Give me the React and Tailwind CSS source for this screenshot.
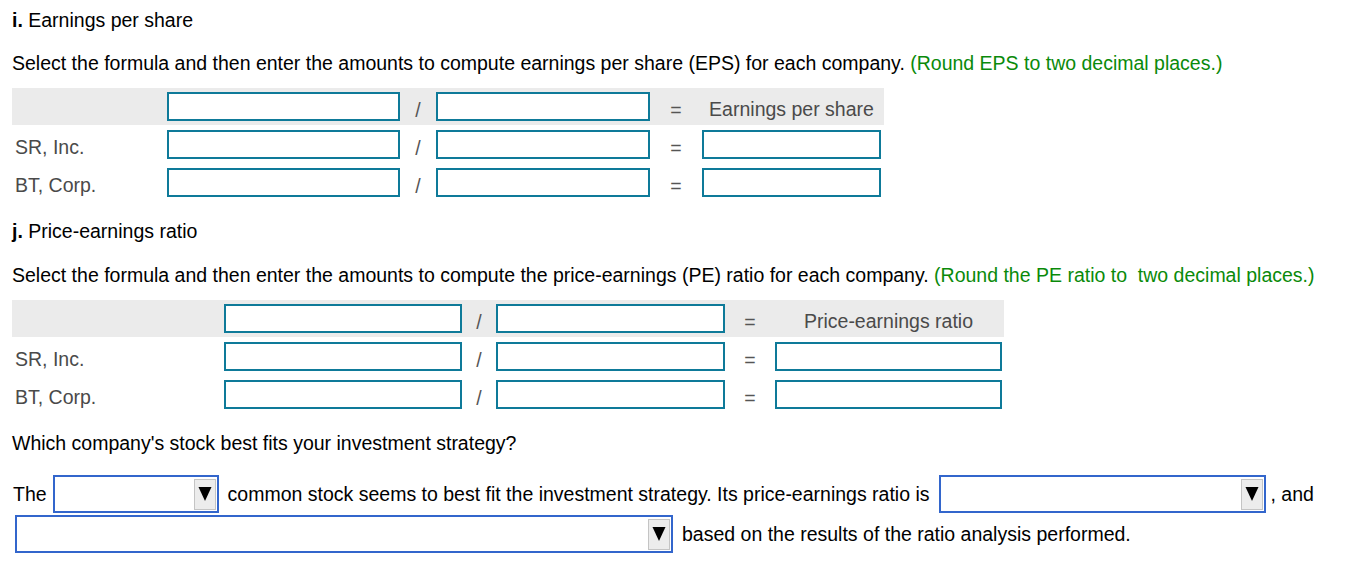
const F = { fontFamily: '"Liberation Sans", Arial, sans-serif' };

const TABLE_I = { label: 155, a: 233, slash: 36, b: 214, eq: 52, res: 179, pad: 3 };
const TABLE_J = { label: 212, a: 238, slash: 34, b: 229, eq: 50, res: 227, pad: 2 };

function Box({ w }) {
  return (
    <div
      className="h-[29px] shrink-0 border-2 border-[#0e7a99] bg-white"
      style={{ width: w }}
    />
  );
}

function Row({ cols, label, header, resultLabel }) {
  return (
    <div
      className={
        "flex items-center " + (header ? "h-[37px] bg-[#ebebeb]" : "h-[38px]")
      }
      style={{ width: cols.label + cols.a + cols.slash + cols.b + cols.eq + cols.res + cols.pad }}
    >
      <div className="shrink-0 pl-[3px] pt-[6px] text-[#4a4a4a]" style={{ width: cols.label }}>
        {label}
      </div>
      <Box w={cols.a} />
      <div className="shrink-0 pt-[7px] text-center text-[#555]" style={{ width: cols.slash }}>/</div>
      <Box w={cols.b} />
      <div className="shrink-0 pt-[7px] text-center text-[#555]" style={{ width: cols.eq }}>=</div>
      {header ? (
        <div className="shrink-0 pt-[5px] text-center text-[#4a4a4a]" style={{ width: cols.res }}>
          {resultLabel}
        </div>
      ) : (
        <Box w={cols.res} />
      )}
    </div>
  );
}

function RatioTable({ cols, resultLabel }) {
  return (
    <div className="flex flex-col">
      <Row cols={cols} header resultLabel={resultLabel} />
      <Row cols={cols} label="SR, Inc." />
      <Row cols={cols} label="BT, Corp." />
    </div>
  );
}

function Select({ w }) {
  return (
    <div
      className="h-[38px] shrink-0 border-2 border-[#3366cc] bg-white flex items-center justify-end pr-[1px]"
      style={{ width: w }}
    >
      <div className="w-[22px] h-[31px] bg-[#ececec] border border-[#c4c4c4] flex items-center justify-center">
        <svg width="14" height="16" viewBox="0 0 14 16">
          <path d="M0.5 1 L13.5 1 L7 15 Z" fill="#000" />
        </svg>
      </div>
    </div>
  );
}

export default function App() {
  return (
    <div className="min-h-screen bg-white text-[19.5px] leading-6 text-black pl-3" style={F}>
      <div className="pt-2">
        <b>i.</b> Earnings per share
      </div>
      <div className="mt-[19px]">
        Select the formula and then enter the amounts to compute earnings per share (EPS) for each company.{" "}
        <span className="text-[#0a8a0a]">(Round EPS to two decimal places.)</span>
      </div>
      <div className="mt-[13px]">
        <RatioTable cols={TABLE_I} resultLabel="Earnings per share" />
      </div>

      <div className="mt-[18px]">
        <b>j.</b> Price-earnings ratio
      </div>
      <div className="mt-5">
        Select the formula and then enter the amounts to compute the price-earnings (PE) ratio for each company.{" "}
        <span className="text-[#0a8a0a]">(Round the PE ratio to&nbsp; two decimal places.)</span>
      </div>
      <div className="mt-[13px]">
        <RatioTable cols={TABLE_J} resultLabel="Price-earnings ratio" />
      </div>

      <div className="mt-[18px]">Which company's stock best fits your investment strategy?</div>

      <div className="mt-5 flex items-center pl-[1px]">
        <span className="mr-[6px]">The</span>
        <Select w={166} />
        <span className="ml-[9px] mr-[9px]">
          common stock seems to best fit the investment strategy. Its price-earnings ratio is
        </span>
        <Select w={327} />
        <span className="ml-[5px]">, and</span>
      </div>
      <div className="mt-[2px] flex items-center pl-[3px]">
        <Select w={658} />
        <span className="ml-[9px]">based on the results of the ratio analysis performed.</span>
      </div>
    </div>
  );
}
